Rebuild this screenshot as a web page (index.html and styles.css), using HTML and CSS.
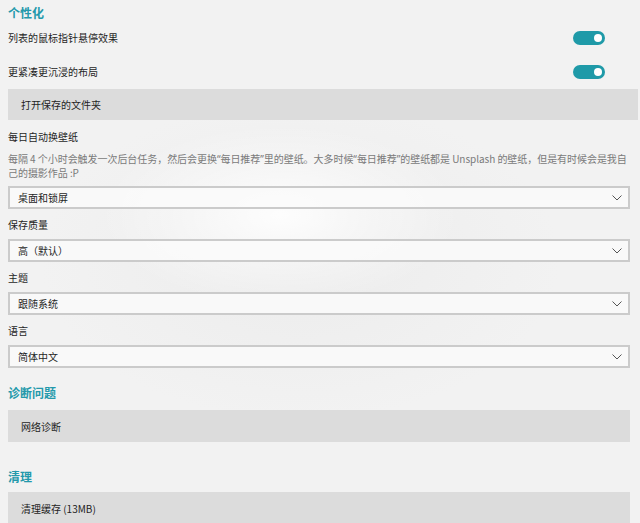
FILE: index.html
```html
<!DOCTYPE html>
<html lang="zh-CN">
<head>
<meta charset="utf-8">
<title>设置</title>
<link rel="stylesheet" href="styles.css">
</head>
<body>
<div class="page">
  <h2 class="section-title first">个性化</h2>
  <div class="toggle-row">
    <span class="label">列表的鼠标指针悬停效果</span>
    <span class="toggle"><span class="knob"></span></span>
  </div>
  <div class="toggle-row">
    <span class="label">更紧凑更沉浸的布局</span>
    <span class="toggle"><span class="knob"></span></span>
  </div>
  <div class="action wide">打开保存的文件夹</div>

  <div class="field-label top">每日自动换壁纸</div>
  <p class="desc">每隔 4 个小时会触发一次后台任务，然后会更换<span class="q">“</span>每日推荐<span class="q">”</span>里的壁纸。大多时候<span class="q">“</span>每日推荐<span class="q">”</span>的壁纸都是 Unsplash 的壁纸，但是有时候会是我自<br>己的摄影作品 :P</p>
  <div class="select first-select">
    <span>桌面和锁屏</span>
    <svg class="chev" width="10" height="6" viewBox="0 0 10 6"><path d="M0.5 0.5 L5 5 L9.5 0.5" fill="none" stroke="#555" stroke-width="1"/></svg>
  </div>

  <div class="field-label">保存质量</div>
  <div class="select">
    <span>高（默认）</span>
    <svg class="chev" width="10" height="6" viewBox="0 0 10 6"><path d="M0.5 0.5 L5 5 L9.5 0.5" fill="none" stroke="#555" stroke-width="1"/></svg>
  </div>

  <div class="field-label">主题</div>
  <div class="select">
    <span>跟随系统</span>
    <svg class="chev" width="10" height="6" viewBox="0 0 10 6"><path d="M0.5 0.5 L5 5 L9.5 0.5" fill="none" stroke="#555" stroke-width="1"/></svg>
  </div>

  <div class="field-label">语言</div>
  <div class="select">
    <span>简体中文</span>
    <svg class="chev" width="10" height="6" viewBox="0 0 10 6"><path d="M0.5 0.5 L5 5 L9.5 0.5" fill="none" stroke="#555" stroke-width="1"/></svg>
  </div>

  <h2 class="section-title diag">诊断问题</h2>
  <div class="action">网络诊断</div>

  <h2 class="section-title clean">清理</h2>
  <div class="action">清理缓存 (13MB)</div>
</div>
</body>
</html>
```

FILE: styles.css
```css
html, body {
  margin: 0;
  padding: 0;
  height: 100%;
  overflow: hidden;
}
body {
  background-color: #f2f2f2;
  background-image:
    radial-gradient(ellipse 180px 90px at 280px 215px, rgba(255,255,255,0.9), rgba(255,255,255,0) 100%),
    radial-gradient(ellipse 260px 160px at 300px 260px, rgba(230,230,230,0.5), rgba(230,230,230,0) 100%);
  font-family: "Microsoft YaHei", "Noto Sans CJK SC", "Noto Sans", sans-serif;
  color: #1f1f1f;
  font-size: 10px;
}
.page {
  padding: 0 10px 0 8px;
  display: flex;
  flex-direction: column;
}
.section-title {
  margin: 0;
  font-size: 12px;
  font-weight: bold;
  color: #2399ab;
  line-height: 18px;
}
.section-title.first {
  padding-top: 4px;
  line-height: 17px;
}
.section-title.diag {
  margin-top: 16px;
}
.section-title.clean {
  margin-top: 26px;
}
.toggle-row {
  height: 34px;
  display: flex;
  align-items: center;
  justify-content: space-between;
  padding-right: 25px;
}
.label {
  line-height: 18px;
}
.toggle {
  width: 32px;
  height: 14px;
  border-radius: 7px;
  background: #1f9aa8;
  display: flex;
  align-items: center;
  justify-content: flex-end;
  padding-right: 3px;
  box-sizing: border-box;
}
.knob {
  width: 8px;
  height: 8px;
  border-radius: 50%;
  background: #ffffff;
}
.action {
  height: 32px;
  background: #dcdcdc;
  display: flex;
  align-items: center;
  padding-left: 13px;
  margin-top: 8px;
}
.action.wide {
  margin-top: 0;
  height: 31px;
  margin-right: -8px;
}
.section-title.clean + .action {
  margin-top: 6px;
}
.field-label {
  line-height: 18px;
  margin-top: 7px;
}
.field-label.top {
  margin-top: 8px;
}
.desc {
  margin: 6px 0 0;
  color: #7a7a7a;
  line-height: 14px;
  white-space: nowrap;
  letter-spacing: -0.05px;
}
.q {
  font-family: "Noto Sans", "Liberation Sans", sans-serif;
}
.select {
  height: 23px;
  box-sizing: border-box;
  border: 2px solid #cbcbcb;
  background: rgba(250,250,250,0.85);
  display: flex;
  align-items: center;
  justify-content: space-between;
  padding: 0 6px 0 8px;
  margin-top: 5px;
}
.select.first-select {
  margin-top: 6px;
}
.chev {
  display: block;
}
```
